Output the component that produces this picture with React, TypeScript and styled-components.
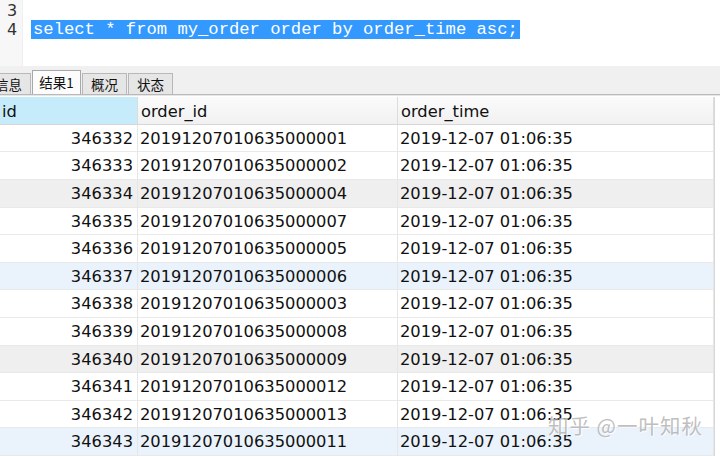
import React from "react";
import styled, { createGlobalStyle } from "styled-components";

const Global = createGlobalStyle`
  html, body { margin: 0; padding: 0; background: #ffffff; overflow: hidden; }
  #root { width: 720px; height: 456px; }
`;

const Page = styled.div`
  position: relative;
  width: 720px;
  height: 456px;
  overflow: hidden;
  background: #ffffff;
  display: flex;
  flex-direction: column;
`;

const Editor = styled.div`
  height: 66px;
  display: flex;
  background: #ffffff;
`;

const Gutter = styled.div`
  width: 22px;
  background: #f7f7f7;
  border-right: 1px solid #f0f0f0;
  padding-top: 1px;
  display: flex;
  flex-direction: column;
  font-family: "DejaVu Sans", Verdana, sans-serif;
  font-size: 16px;
  color: #333;
`;

const LineNo = styled.div`
  height: 19px;
  line-height: 19px;
  padding-left: 7px;
`;

const Code = styled.div`
  flex: 1;
  padding-left: 8px;
  padding-top: 1px;
  display: flex;
  flex-direction: column;
  font-family: "Liberation Mono", "Courier New", monospace;
  font-size: 17.2px;
`;

const CodeLine = styled.div`
  height: 19px;
  line-height: 19px;
  display: flex;
`;

const Selected = styled.span`
  background: #3399ff;
  color: #ffffff;
  padding: 0 2px 0 2px;
  white-space: pre;
`;

const TabBar = styled.div`
  height: 27px;
  background: #f0f0f0;
  display: flex;
  align-items: flex-end;
  padding-top: 1px;
  border-bottom: 1px solid #b9b9b9;
  box-shadow: 0 1px 0 #e6e6e6;
  margin-bottom: 2px;
`;

const Tabs = styled.div`
  display: flex;
  align-items: flex-end;
  margin-left: -14px;
  gap: 1px;
`;

const Tab = styled.div<{ $active?: boolean }>`
  box-sizing: border-box;
  width: ${(p) => (p.$active ? 49 : 45)}px;
  height: ${(p) => (p.$active ? 24 : 21)}px;
  background: ${(p) => (p.$active ? "#fcfcfc" : "#e6e6e6")};
  border: 1px solid ${(p) => (p.$active ? "#a8a8a8" : "#b8b8b8")};
  border-bottom: none;
  font-family: "Noto Sans CJK SC", "Microsoft YaHei", sans-serif;
  font-size: 13.5px;
  color: #111;
  display: flex;
  align-items: center;
  justify-content: center;
  padding-bottom: ${(p) => (p.$active ? 1 : 0)}px;
`;

const Grid = styled.div`
  display: grid;
  grid-template-columns: 138px 260px 316px 6px;
  font-family: "DejaVu Sans", Verdana, sans-serif;
  font-size: 16.3px;
  color: #111;
`;

const HeadCell = styled.div<{ $selected?: boolean }>`
  box-sizing: border-box;
  height: 28px;
  line-height: 29px;
  padding-left: ${(p) => (p.$selected ? 2 : 3)}px;
  background: ${(p) => (p.$selected ? "#c6ecfb" : "linear-gradient(#fbfbfb, #f1f1f1)")};
  border-right: 1px solid #dcdcdc;
  border-bottom: 1px solid #d6d6d6;
  white-space: nowrap;
`;

const Edge = styled.div`
  border-left: 1px solid #d8d8d8;
  background: #ffffff;
`;

const Cell = styled.div<{ $bg: string; $right?: boolean }>`
  box-sizing: border-box;
  height: 27.6px;
  line-height: 27px;
  background: ${(p) => p.$bg};
  border-right: 1px solid #e6e6e6;
  border-bottom: 1px solid #e9e9e9;
  text-align: ${(p) => (p.$right ? "right" : "left")};
  padding: ${(p) => (p.$right ? "0 4px 0 0" : "0 0 0 2px")};
  white-space: nowrap;
  overflow: hidden;
`;

const Watermark = styled.div`
  position: absolute;
  left: 548px;
  top: 410px;
  font-family: "Noto Sans CJK SC", sans-serif;
  font-size: 20.5px;
  color: rgba(170, 170, 170, 0.75);
  text-shadow: 1px 1px 0 rgba(255, 255, 255, 0.8);
  letter-spacing: 1px;
  white-space: pre;
`;

const rows: [string, string][] = [
  ["346332", "20191207010635000001"],
  ["346333", "20191207010635000002"],
  ["346334", "20191207010635000004"],
  ["346335", "20191207010635000007"],
  ["346336", "20191207010635000005"],
  ["346337", "20191207010635000006"],
  ["346338", "20191207010635000003"],
  ["346339", "20191207010635000008"],
  ["346340", "20191207010635000009"],
  ["346341", "20191207010635000012"],
  ["346342", "20191207010635000013"],
  ["346343", "20191207010635000011"],
];

const rowBg = (i: number) => {
  if (i % 6 === 2) return "#efefef";
  if (i % 6 === 5) return "#eaf3fc";
  return "#ffffff";
};

export default function App() {
  return (
    <Page>
      <Global />
      <Editor>
        <Gutter>
          <LineNo>3</LineNo>
          <LineNo>4</LineNo>
        </Gutter>
        <Code>
          <CodeLine />
          <CodeLine>
            <Selected>select * from my_order order by order_time asc;</Selected>
          </CodeLine>
        </Code>
      </Editor>
      <TabBar>
        <Tabs>
          <Tab>信息</Tab>
          <Tab $active>结果1</Tab>
          <Tab>概况</Tab>
          <Tab>状态</Tab>
        </Tabs>
      </TabBar>
      <Grid>
        <HeadCell $selected>id</HeadCell>
        <HeadCell>order_id</HeadCell>
        <HeadCell>order_time</HeadCell>
        <Edge />
        {rows.map(([id, oid], i) => (
          <React.Fragment key={id}>
            <Cell $bg={rowBg(i)} $right>
              {id}
            </Cell>
            <Cell $bg={rowBg(i)}>{oid}</Cell>
            <Cell $bg={rowBg(i)}>2019-12-07 01:06:35</Cell>
            <Edge />
          </React.Fragment>
        ))}
      </Grid>
      <Watermark>知乎 @一叶知秋</Watermark>
    </Page>
  );
}
